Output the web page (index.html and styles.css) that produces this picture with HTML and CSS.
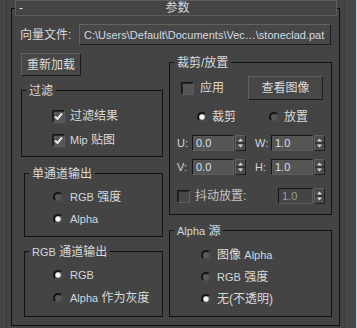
FILE: index.html
```html
<!DOCTYPE html>
<html>
<head>
<meta charset="utf-8">
<link rel="stylesheet" href="styles.css">
</head>
<body>
<div class="app">
  <div class="gutter"></div>
  <div class="rollout">
    <div class="titlebar">
      <span class="collapse">-</span>
      <span class="title">参数</span>
      <span></span>
    </div>
    <div class="file-row">
      <span class="file-label">向量文件:</span>
      <div class="btn path-btn"><span class="lat path">C:\Users\Default\Documents\Vec…\stoneclad.pat</span></div>
    </div>
    <div class="columns">
      <div class="col-left">
        <div class="btn reload-btn">重新加载</div>

        <div class="group g-filter">
          <div class="legend"><span>过滤</span></div>
          <div class="opts opts-filter">
            <div class="opt"><span class="check on"><svg width="13" height="13" viewBox="0 0 13 13"><polyline points="3,6.5 5.5,9 10,3.5" fill="none" stroke="#e8e8e8" stroke-width="2"/></svg></span><span>过滤结果</span></div>
            <div class="opt"><span class="check on"><svg width="13" height="13" viewBox="0 0 13 13"><polyline points="3,6.5 5.5,9 10,3.5" fill="none" stroke="#e8e8e8" stroke-width="2"/></svg></span><span><span class="lat">Mip</span> 贴图</span></div>
          </div>
        </div>

        <div class="group g-inset g-mono">
          <div class="legend"><span>单通道输出</span></div>
          <div class="opts opts-mono">
            <div class="opt"><span class="radio"></span><span><span class="lat">RGB</span> 强度</span></div>
            <div class="opt"><span class="radio on"></span><span class="lat">Alpha</span></div>
          </div>
        </div>

        <div class="group g-inset g-rgb">
          <div class="legend"><span><span class="lat">RGB</span> 通道输出</span></div>
          <div class="opts opts-rgb">
            <div class="opt"><span class="radio on"></span><span class="lat">RGB</span></div>
            <div class="opt"><span class="radio"></span><span><span class="lat">Alpha</span> 作为灰度</span></div>
          </div>
        </div>
      </div>

      <div class="col-right">
        <div class="group g-crop">
          <div class="legend"><span>裁剪/放置</span></div>
          <div class="apply-row">
            <div class="opt"><span class="check"></span><span>应用</span></div>
            <div class="btn view-btn">查看图像</div>
          </div>
          <div class="mode-row">
            <div class="opt"><span class="radio on"></span><span>裁剪</span></div>
            <div class="opt"><span class="radio"></span><span>放置</span></div>
          </div>
          <div class="spin-row">
            <span class="spin-label lat">U:</span>
            <span class="spin-input lat">0.0</span>
            <svg class="arrows" width="11" height="16" viewBox="0 0 11 16"><rect x="0.5" y="0.5" width="10" height="15" fill="#4b4b4b" stroke="#1e1e1e"/><line x1="0.5" y1="0.5" x2="10.5" y2="0.5" stroke="#626262"/><line x1="0.5" y1="0.5" x2="0.5" y2="15.5" stroke="#626262"/><line x1="1" y1="8" x2="10" y2="8" stroke="#1e1e1e"/><path d="M3 6.5 L5.5 3.5 L8 6.5Z" fill="#dcdcdc"/><path d="M3 9.5 L5.5 12.5 L8 9.5Z" fill="#dcdcdc"/></svg>
            <span class="spin-label lat w-label">W:</span>
            <span class="spin-input lat">1.0</span>
            <svg class="arrows" width="11" height="16" viewBox="0 0 11 16"><rect x="0.5" y="0.5" width="10" height="15" fill="#4b4b4b" stroke="#1e1e1e"/><line x1="0.5" y1="0.5" x2="10.5" y2="0.5" stroke="#626262"/><line x1="0.5" y1="0.5" x2="0.5" y2="15.5" stroke="#626262"/><line x1="1" y1="8" x2="10" y2="8" stroke="#1e1e1e"/><path d="M3 6.5 L5.5 3.5 L8 6.5Z" fill="#dcdcdc"/><path d="M3 9.5 L5.5 12.5 L8 9.5Z" fill="#dcdcdc"/></svg>
          </div>
          <div class="spin-row">
            <span class="spin-label lat">V:</span>
            <span class="spin-input lat">0.0</span>
            <svg class="arrows" width="11" height="16" viewBox="0 0 11 16"><rect x="0.5" y="0.5" width="10" height="15" fill="#4b4b4b" stroke="#1e1e1e"/><line x1="0.5" y1="0.5" x2="10.5" y2="0.5" stroke="#626262"/><line x1="0.5" y1="0.5" x2="0.5" y2="15.5" stroke="#626262"/><line x1="1" y1="8" x2="10" y2="8" stroke="#1e1e1e"/><path d="M3 6.5 L5.5 3.5 L8 6.5Z" fill="#dcdcdc"/><path d="M3 9.5 L5.5 12.5 L8 9.5Z" fill="#dcdcdc"/></svg>
            <span class="spin-label lat w-label">H:</span>
            <span class="spin-input lat">1.0</span>
            <svg class="arrows" width="11" height="16" viewBox="0 0 11 16"><rect x="0.5" y="0.5" width="10" height="15" fill="#4b4b4b" stroke="#1e1e1e"/><line x1="0.5" y1="0.5" x2="10.5" y2="0.5" stroke="#626262"/><line x1="0.5" y1="0.5" x2="0.5" y2="15.5" stroke="#626262"/><line x1="1" y1="8" x2="10" y2="8" stroke="#1e1e1e"/><path d="M3 6.5 L5.5 3.5 L8 6.5Z" fill="#dcdcdc"/><path d="M3 9.5 L5.5 12.5 L8 9.5Z" fill="#dcdcdc"/></svg>
          </div>
          <div class="jitter-row">
            <div class="opt"><span class="check off"></span><span class="jitter-label">抖动放置:</span></div>
            <span class="spin-input lat disabled">1.0</span>
            <svg class="arrows" width="11" height="16" viewBox="0 0 11 16"><rect x="0.5" y="0.5" width="10" height="15" fill="#4b4b4b" stroke="#1e1e1e"/><line x1="0.5" y1="0.5" x2="10.5" y2="0.5" stroke="#626262"/><line x1="0.5" y1="0.5" x2="0.5" y2="15.5" stroke="#626262"/><line x1="1" y1="8" x2="10" y2="8" stroke="#1e1e1e"/><path d="M3 6.5 L5.5 3.5 L8 6.5Z" fill="#dcdcdc"/><path d="M3 9.5 L5.5 12.5 L8 9.5Z" fill="#dcdcdc"/></svg>
          </div>
        </div>

        <div class="group g-alpha">
          <div class="legend"><span><span class="lat">Alpha</span> 源</span></div>
          <div class="opts opts-alpha">
            <div class="opt"><span class="radio"></span><span>图像 <span class="lat">Alpha</span></span></div>
            <div class="opt"><span class="radio"></span><span><span class="lat">RGB</span> 强度</span></div>
            <div class="opt"><span class="radio on"></span><span>无(不透明)</span></div>
          </div>
        </div>
      </div>
    </div>
  </div>
  <div class="rail"></div>
</div>
</body>
</html>
```

FILE: styles.css
```css
* { box-sizing: border-box; }

html, body {
  margin: 0;
  padding: 0;
}

body {
  width: 357px;
  height: 328px;
  overflow: hidden;
  background: #444444;
  color: #dadada;
  font-family: "Liberation Sans", "Noto Sans CJK SC", sans-serif;
  font-size: 12px;
  line-height: 14px;
}

.lat {
  font-size: 11px;
  color: #cfd7df;
}

.app {
  display: flex;
  height: 328px;
}

.gutter {
  width: 7px;
  flex: none;
  border-right: 1px solid #363636;
}

.rollout {
  flex: none;
  width: 329px;
  height: 318px;
  margin: 8px 0 0 4px;
  border: 1px solid #111111;
}

.rail {
  flex: none;
  width: 13px;
  margin-left: 4px;
  border-left: 1px solid #3a3a3a;
  border-right: 1px solid #cbd9e6;
  background: #464646;
}

/* title bar */
.titlebar {
  display: grid;
  grid-template-columns: 1fr auto 1fr;
  align-items: center;
  height: 16px;
  margin: -9px 2px 0 3px;
  padding-left: 3px;
  border: 1px solid #5c5c5c;
  background: #444444;
}

.collapse {
  font-size: 12px;
  line-height: 12px;
}

.title {
  line-height: 14px;
}

/* buttons */
.btn {
  display: flex;
  align-items: center;
  justify-content: center;
  border: 1px solid;
  border-color: #626262 #1c1c1c #1c1c1c #626262;
  background: #474747;
  white-space: nowrap;
}

/* file row */
.file-row {
  display: flex;
  align-items: center;
  margin-top: 8px;
  padding-left: 8px;
  height: 21px;
}

.file-label {
  width: 59px;
  flex: none;
}

.path-btn {
  width: 252px;
  height: 21px;
  justify-content: flex-start;
  padding-left: 4px;
  overflow: hidden;
}

.path {
  color: #d2dbe4;
}

/* columns */
.columns {
  display: grid;
  grid-template-columns: 142px 163px;
  column-gap: 6px;
  padding-left: 9px;
  align-items: start;
}

.reload-btn {
  width: 60px;
  height: 23px;
  margin-top: 8px;
}

/* group boxes */
.group {
  border: 1px solid #121212;
}

.g-inset {
  margin-left: 3px;
}

.legend {
  height: 14px;
  margin-top: -7px;
  padding-left: 4px;
  line-height: 14px;
  white-space: nowrap;
}

.legend > span {
  background: #444444;
  padding: 0 3px;
}

.g-filter { margin-top: 14px; }
.g-mono { margin-top: 16px; }
.g-rgb { margin-top: 14px; }
.g-crop { margin-top: 17px; }
.g-alpha { margin-top: 15px; }

.opts {
  display: flex;
  flex-direction: column;
}

.opt {
  display: flex;
  align-items: center;
  white-space: nowrap;
}

.opts-filter { padding: 6px 0 4px 30px; }
.opts-filter .opt { height: 24px; gap: 5px; }

.opts-mono { padding: 5px 0 6px 28px; }
.opts-mono .opt { height: 22px; gap: 7px; }

.opts-rgb { padding: 4px 0 7px 28px; }
.opts-rgb .opt { height: 23px; gap: 7px; }

.opts-alpha { padding: 6px 0 6px 31px; }
.opts-alpha .opt { height: 22px; gap: 6px; }

/* checkbox */
.check {
  flex: none;
  width: 13px;
  height: 13px;
  border: 1px solid;
  border-color: #161616 #5e5e5e #5e5e5e #161616;
  box-shadow: inset 1px 1px 0 #2a2a2a;
  background: #555555;
  display: flex;
  align-items: center;
  justify-content: center;
}

.check.off {
  background: #474747;
}

.check svg {
  display: block;
  margin: -1px;
}

/* radio */
.radio {
  flex: none;
  width: 10px;
  height: 10px;
  border-radius: 50%;
  border: 2px solid;
  border-color: #151515 #4c4c4c #4c4c4c #151515;
  background: #595959;
}

.radio.on {
  background: radial-gradient(circle, #f4f4f4 0 2px, #9a9a9a 3px);
}

/* crop group */
.apply-row {
  display: flex;
  align-items: center;
  justify-content: space-between;
  height: 24px;
  margin-top: 6px;
  padding: 0 8px 0 11px;
}

.apply-row .opt { gap: 6px; }

.view-btn {
  width: 75px;
  height: 24px;
}

.mode-row {
  display: flex;
  align-items: center;
  height: 21px;
  margin-top: 6px;
  padding-left: 27px;
}

.mode-row .opt { gap: 5px; }
.mode-row .opt + .opt { margin-left: 33px; }

.spin-row {
  display: flex;
  align-items: center;
  height: 16px;
  margin-top: 8px;
  padding-left: 7px;
}

.spin-label {
  width: 15px;
  flex: none;
}

.w-label {
  width: 16px;
  margin-left: 9px;
}

.spin-input {
  flex: none;
  width: 42px;
  height: 16px;
  padding-left: 3px;
  line-height: 14px;
  border: 1px solid;
  border-color: #151515 #5e5e5e #5e5e5e #151515;
  background: #555555;
  color: #d6e2ee;
}

.arrows {
  flex: none;
  display: block;
  margin-left: 1px;
}

.jitter-row {
  display: flex;
  align-items: center;
  height: 16px;
  margin-top: 13px;
  margin-bottom: 10px;
  padding: 0 6px 0 7px;
}

.jitter-row .opt {
  gap: 5px;
  margin-right: auto;
}

.jitter-label {
  color: #c4c4c4;
}

.spin-input.disabled {
  width: 35px;
  background: #444444;
  color: #9a9a9a;
}
```
